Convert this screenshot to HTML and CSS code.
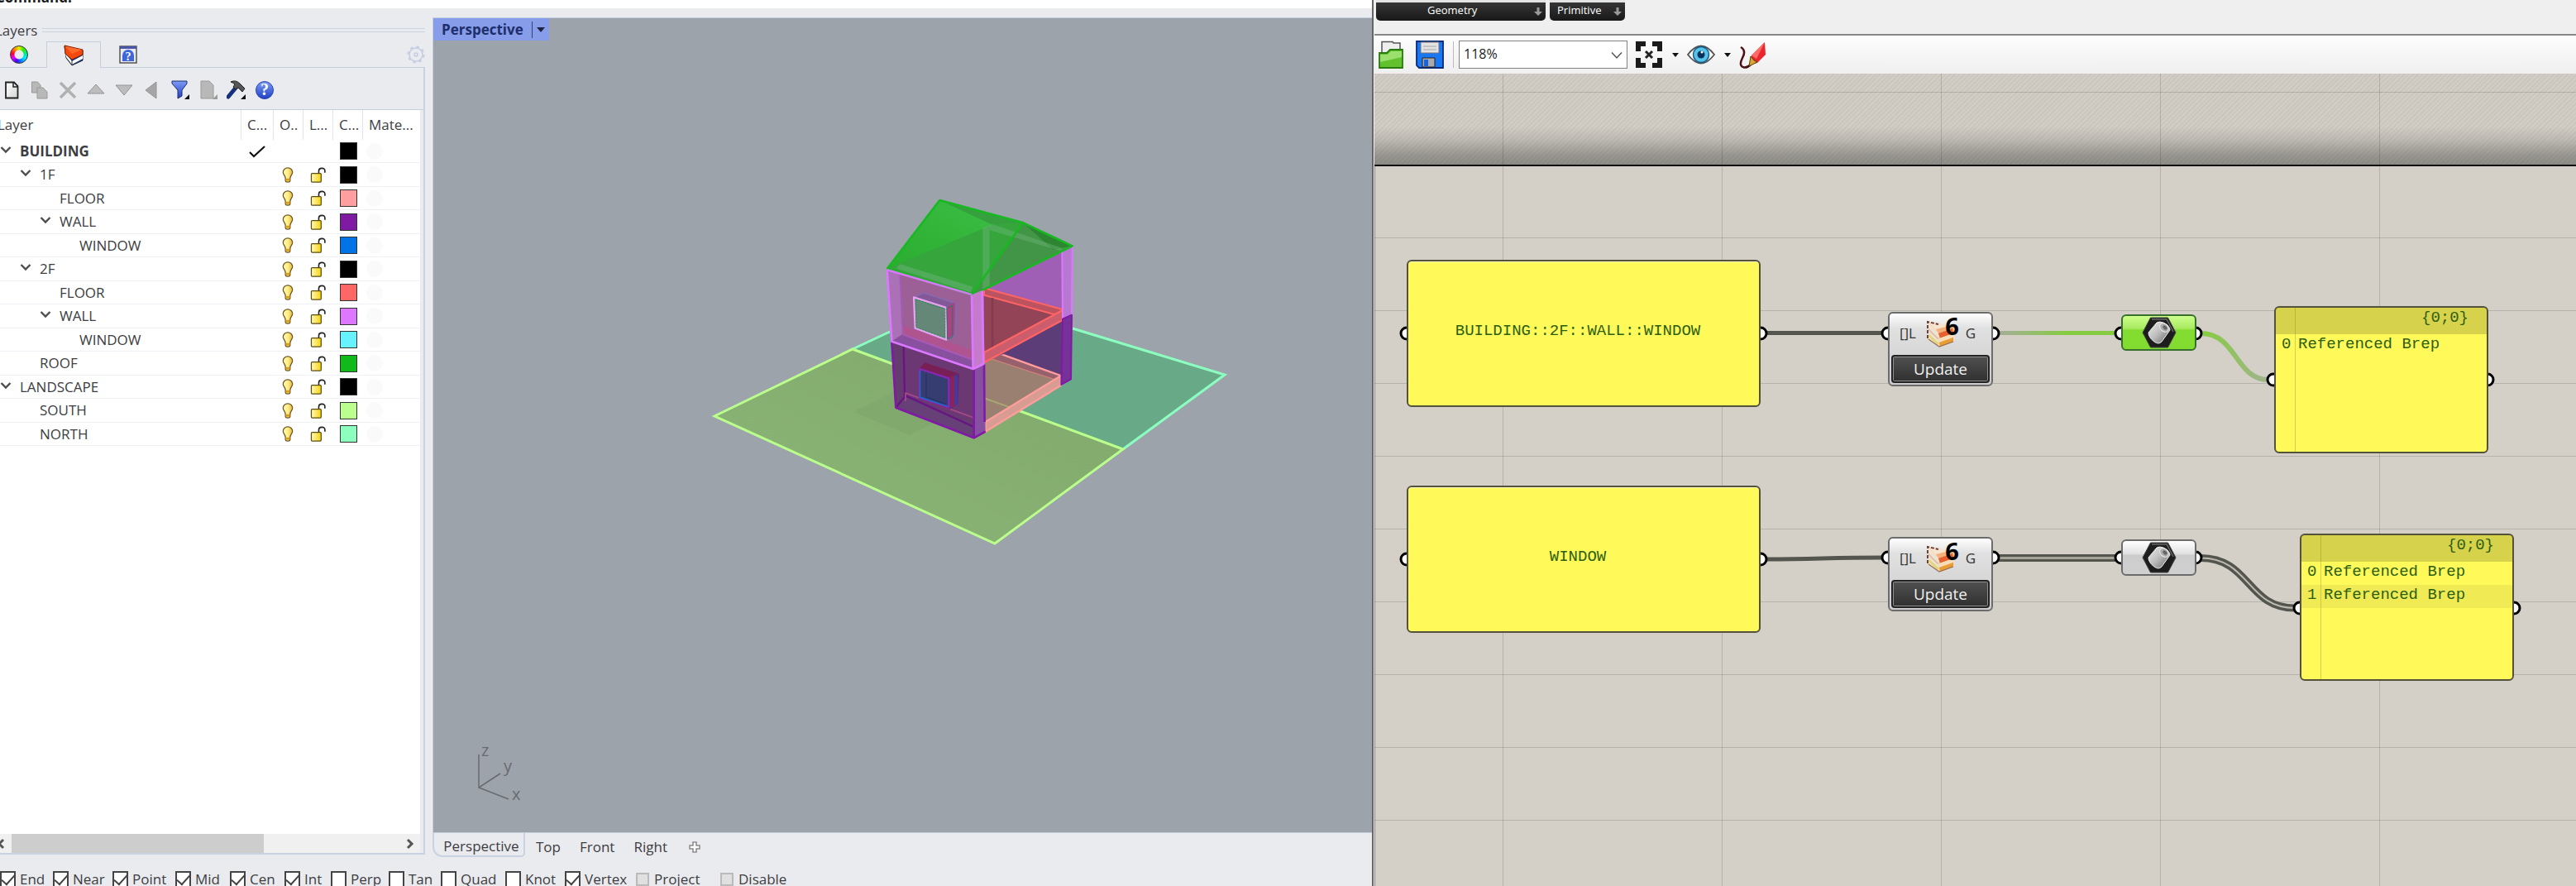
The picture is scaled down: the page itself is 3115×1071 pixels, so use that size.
FILE: index.html
```html
<!DOCTYPE html>
<html lang="en">
<head>
<meta charset="utf-8">
<title>Layers and graph</title>
<link rel="stylesheet" href="styles.css">
</head>
<body>
<svg class="defs" aria-hidden="true">
  <defs>
    <linearGradient id="gBulb" x1="0" y1="0" x2="1" y2="0"><stop offset="0" stop-color="#fff6b0"/><stop offset=".5" stop-color="#fff08a"/><stop offset="1" stop-color="#e8b83c"/></linearGradient>
    <linearGradient id="gLock" x1="0" y1="0" x2="1" y2="0"><stop offset="0" stop-color="#fff9bd"/><stop offset="1" stop-color="#f7d40d"/></linearGradient>
    <linearGradient id="gBlue" x1="0" y1="0" x2="0" y2="1"><stop offset="0" stop-color="#7e9bf5"/><stop offset="1" stop-color="#1f3fc4"/></linearGradient>
    <linearGradient id="gPage" x1="0" y1="0" x2="1" y2="1"><stop offset="0" stop-color="#fff"/><stop offset="1" stop-color="#d4d4d4"/></linearGradient>
    <linearGradient id="gMetal" x1="0" y1="0" x2="1" y2="1"><stop offset="0" stop-color="#eee"/><stop offset=".5" stop-color="#bbb"/><stop offset="1" stop-color="#666"/></linearGradient>
    <symbol id="chev" viewBox="0 0 14 10"><path d="M1.500 2 7 7.500 12.500 2" fill="none" stroke="#4d4d4d" stroke-width="2.400"/></symbol>
    <symbol id="bulb" viewBox="0 0 14 20"><path d="M7 1C3.500 1 1 3.500 1 6.500 1 9.500 4 11 4 14.500V17q0 2 3 2t3-2V14.500C10 11 13 9.500 13 6.500 13 3.500 10.500 1 7 1Z" fill="url(#gBulb)" stroke="#6b5220" stroke-width="1.300"/><path d="M4.500 14.500h5v3h-5z" fill="#d99e1c"/></symbol>
    <symbol id="lock" viewBox="0 0 20 20"><path d="M10.500 8V5Q10.500 1.500 14.500 1.500T18.300 5V7" fill="none" stroke="#222" stroke-width="1.700"/><rect x="1" y="8" width="12.500" height="11" rx="1" fill="url(#gLock)" stroke="#5c4c10" stroke-width="1.300"/></symbol>
    <symbol id="cake" viewBox="0 0 36 34">
      <path d="M2 3 16 6 30 8 34 18 33 27 16 33 8 28 2 24Z" fill="#f3dcc0"/>
      <path d="M2 3 18 5 30 12 18 18Z" fill="#f8e4cf"/>
      <path d="M12 12 32 7 34 14 18 22Z" fill="#f2b27c"/>
      <path d="M15 17 32 11 33 17 17 23Z" fill="#e8602f"/>
      <path d="M16 23 33 17 33 22 17 28Z" fill="#f7dcb4"/>
      <path d="M16 28 33 22 33 27 17 33Z" fill="#e99b34"/>
      <path d="M2 5 15 17V32L2 23Z" fill="#efe3d3"/>
      <path d="M3 12 15 24" stroke="#dfc0a8" stroke-width="2"/>
      <path d="M3 19 15 30" stroke="#e0d67c" stroke-width="3"/>
      <path d="M2 23V3L15 6" fill="none" stroke="#6d403c" stroke-width="2" stroke-dasharray="4 2"/>
      <path d="M3 24 16 33 33 27" fill="none" stroke="#9a6c50" stroke-width="1.200"/>
    </symbol>
    <symbol id="brep" viewBox="0 0 42 38">
      <path d="M10.500 1h21L41 19 31.500 37h-21L1 19Z" fill="#1d1d1d" stroke="#444"/>
      <path d="M12 3h18L38 18" fill="none" stroke="#666" stroke-width="1.500"/>
      <path d="M8 19 18 7q3-2 8 0 8 4 8 9L24 30q-4 4-9 0-7-5-7-11Z" fill="url(#gMetal)" stroke="#eee"/>
      <ellipse cx="27" cy="13" rx="6" ry="4.500" transform="rotate(45 27 13)" fill="#aaa" stroke="#eee"/><ellipse cx="28" cy="13" rx="3" ry="2" transform="rotate(45 28 13)" fill="#666"/>
    </symbol>
  </defs>
</svg>
<div class="screen">
  <main class="modeler">
    <div class="command"><span>Command:</span></div>
    <div class="workspace">
      <aside class="side">
        <h2 class="side-title"><span>Layers</span><i></i></h2>
        <div class="side-tabs">
          <button class="side-tab" aria-label="Properties"><span class="wheel"></span></button>
          <button class="side-tab active" aria-label="Layers"><svg width="24" height="26" viewBox="0 0 24 26"><path d="M1 2 23 7V19L10 25 3 16Z" fill="#123a8c" stroke="#222"/><path d="M2 10 10 20 23 13V17L10 24 3 15Z" fill="#fff"/><path d="M1 1 23 6V12L10 18 2 11Z" fill="#f4480d" stroke="#7b2108"/><path d="M2 2 22 6 10 11Z" fill="#ff6a2a"/><path d="M10 18V25" stroke="#333"/></svg></button>
          <button class="side-tab" aria-label="Help"><svg width="22" height="22" viewBox="0 0 22 22"><rect x="1" y="1" width="20" height="20" fill="#e8ebf2" stroke="#555" stroke-width="1.500"/><path d="M1 1h20v3H1z" fill="#4d55a8"/><path d="M4 19V12a7 7 0 0 1 14 0V19Z" fill="#3f66d8"/><text x="11" y="18" text-anchor="middle" class="q-mark">?</text></svg></button>
          <button class="gear" aria-label="Options"><svg width="22" height="22" viewBox="0 0 22 22" fill="none" stroke="#c3cde2" stroke-width="1.500"><circle cx="11" cy="11" r="8"/><circle cx="11" cy="11" r="9.500" stroke-width="2" stroke-dasharray="3.500 3.960"/><circle cx="11" cy="11" r="2"/></svg></button>
        </div>
        <div class="panel">
          <div class="tools">
            <button aria-label="New layer"><svg width="18" height="22" viewBox="0 0 18 22"><path d="M2 1.500H12L16.500 6V20.500H2Z" fill="url(#gPage)" stroke="#222" stroke-width="1.800"/><path d="M11 2V7H16" fill="none" stroke="#222" stroke-width="1.500"/></svg></button>
            <button aria-label="New sublayer"><svg width="20" height="22" viewBox="0 0 20 22"><g fill="#b8b8b8" stroke="#999"><path d="M.5 1h7L11 5v9H.5Z"/><path d="M7 8h7l5 5v8H7Z"/></g></svg></button>
            <button aria-label="Delete"><svg width="22" height="22" viewBox="0 0 22 22"><path d="M2 2 20 20M20 2 2 20" stroke="#b0b0b0" stroke-width="3.500"/></svg></button>
            <button aria-label="Move up"><svg width="22" height="22" viewBox="0 0 22 22"><path d="M11 4 21 15H1Z" fill="#bcbcbc" stroke="#949494"/></svg></button>
            <button aria-label="Move down"><svg width="22" height="22" viewBox="0 0 22 22"><path d="M11 17 21 5H1Z" fill="#bcbcbc" stroke="#949494"/></svg></button>
            <button aria-label="Move out"><svg width="22" height="22" viewBox="0 0 22 22"><path d="M3 11 16 1V21Z" fill="#a6a6a6" stroke="#949494"/></svg></button>
            <button aria-label="Filter"><svg width="24" height="24" viewBox="0 0 24 24"><path d="M2 1H20V4L14 12V19L9 22V12L2 4Z" fill="url(#gBlue)" stroke="#1c2f70"/><path d="M23 17V23H17Z" fill="#111"/></svg></button>
            <button aria-label="Report"><svg width="24" height="24" viewBox="0 0 24 24"><path d="M3 1H13L18 6V22H3Z" fill="#b8b8b8" stroke="#999"/><path d="M23 17V23H17Z" fill="#999"/></svg></button>
            <button aria-label="Tools"><svg width="24" height="24" viewBox="0 0 24 24"><path d="M2 20 12 8" stroke="#17307e" stroke-width="5" stroke-linecap="round"/><path d="M5 2Q11-1 16 4L22 10 19 14 14 9 11 11 8 8 10 5Q8 3 5 2Z" fill="#555" stroke="#222"/><path d="M23 17V23H17Z" fill="#111"/></svg></button>
            <button aria-label="Help"><svg width="24" height="24" viewBox="0 0 24 24"><circle cx="12" cy="12" r="10.500" fill="url(#gBlue)" stroke="#2745b5"/><text x="12" y="18" text-anchor="middle" class="q-mark big">?</text></svg></button>
          </div>
          <div class="list">
            <table class="layers">
              <colgroup><col><col class="c-cur"><col class="c-ico"><col class="c-ico"><col class="c-ico"><col class="c-mat"></colgroup>
              <thead><tr><th class="name-head">Layer</th><th>C...</th><th>O..</th><th>L...</th><th>C...</th><th>Mate...</th></tr></thead>
              <tbody>
                <tr><td class="l0 current"><svg class="chev"><use href="#chev"/></svg>BUILDING</td><td><svg class="check" viewBox="0 0 20 16"><path d="M1 9 6 14 19 2" fill="none" stroke="#111" stroke-width="2.200"/></svg></td><td></td><td></td><td><i class="sw" style="background:#000"></i></td><td><i class="mat"></i></td></tr>
                <tr><td class="l1"><svg class="chev"><use href="#chev"/></svg>1F</td><td></td><td><svg class="bulb"><use href="#bulb"/></svg></td><td><svg class="lock"><use href="#lock"/></svg></td><td><i class="sw" style="background:#000"></i></td><td><i class="mat"></i></td></tr>
                <tr><td class="l2">FLOOR</td><td></td><td><svg class="bulb"><use href="#bulb"/></svg></td><td><svg class="lock"><use href="#lock"/></svg></td><td><i class="sw" style="background:#ff9f9f"></i></td><td><i class="mat"></i></td></tr>
                <tr><td class="l2"><svg class="chev"><use href="#chev"/></svg>WALL</td><td></td><td><svg class="bulb"><use href="#bulb"/></svg></td><td><svg class="lock"><use href="#lock"/></svg></td><td><i class="sw" style="background:#7f1aa3"></i></td><td><i class="mat"></i></td></tr>
                <tr><td class="l3">WINDOW</td><td></td><td><svg class="bulb"><use href="#bulb"/></svg></td><td><svg class="lock"><use href="#lock"/></svg></td><td><i class="sw" style="background:#0073e6"></i></td><td><i class="mat"></i></td></tr>
                <tr><td class="l1"><svg class="chev"><use href="#chev"/></svg>2F</td><td></td><td><svg class="bulb"><use href="#bulb"/></svg></td><td><svg class="lock"><use href="#lock"/></svg></td><td><i class="sw" style="background:#000"></i></td><td><i class="mat"></i></td></tr>
                <tr><td class="l2">FLOOR</td><td></td><td><svg class="bulb"><use href="#bulb"/></svg></td><td><svg class="lock"><use href="#lock"/></svg></td><td><i class="sw" style="background:#ff6666"></i></td><td><i class="mat"></i></td></tr>
                <tr><td class="l2"><svg class="chev"><use href="#chev"/></svg>WALL</td><td></td><td><svg class="bulb"><use href="#bulb"/></svg></td><td><svg class="lock"><use href="#lock"/></svg></td><td><i class="sw" style="background:#dd77ff"></i></td><td><i class="mat"></i></td></tr>
                <tr><td class="l3">WINDOW</td><td></td><td><svg class="bulb"><use href="#bulb"/></svg></td><td><svg class="lock"><use href="#lock"/></svg></td><td><i class="sw" style="background:#66f2ff"></i></td><td><i class="mat"></i></td></tr>
                <tr><td class="l1">ROOF</td><td></td><td><svg class="bulb"><use href="#bulb"/></svg></td><td><svg class="lock"><use href="#lock"/></svg></td><td><i class="sw" style="background:#10ba18"></i></td><td><i class="mat"></i></td></tr>
                <tr><td class="l0"><svg class="chev"><use href="#chev"/></svg>LANDSCAPE</td><td></td><td><svg class="bulb"><use href="#bulb"/></svg></td><td><svg class="lock"><use href="#lock"/></svg></td><td><i class="sw" style="background:#000"></i></td><td><i class="mat"></i></td></tr>
                <tr><td class="l1">SOUTH</td><td></td><td><svg class="bulb"><use href="#bulb"/></svg></td><td><svg class="lock"><use href="#lock"/></svg></td><td><i class="sw" style="background:#bbff8f"></i></td><td><i class="mat"></i></td></tr>
                <tr><td class="l1">NORTH</td><td></td><td><svg class="bulb"><use href="#bulb"/></svg></td><td><svg class="lock"><use href="#lock"/></svg></td><td><i class="sw" style="background:#8cffbf"></i></td><td><i class="mat"></i></td></tr>
              </tbody>
            </table>
            <div class="hscroll"><svg width="10" height="14" viewBox="0 0 10 14"><path d="M8 2 3 7 8 12" fill="none" stroke="#555" stroke-width="3"/></svg><i></i><svg width="10" height="14" viewBox="0 0 10 14"><path d="M2 2 7 7 2 12" fill="none" stroke="#555" stroke-width="3"/></svg></div>
          </div>
        </div>
      </aside>
      <section class="views">
        <div class="viewport">
          <div class="view-label"><span>Perspective</span><button aria-label="View menu"></button></div>
          <svg class="scene" viewBox="524 22 1135 984">
            <defs><linearGradient id="gSouth" x1="0" y1="1" x2="1" y2="0"><stop offset="0" stop-color="#8cb578"/><stop offset="1" stop-color="#80a86b"/></linearGradient>
            <linearGradient id="gRoof" x1="0" y1="1" x2="1" y2="0"><stop offset="0" stop-color="#26a92b"/><stop offset="1" stop-color="#42c24a"/></linearGradient></defs>
            <path d="M1031 422 1076 401 1173 357 1297 397 1481 453 1358 543Z" fill="#68aa88"/>
            <path d="M1031 422 1076 401M1297 397 1481 453 1358 543" fill="none" stroke="#8cffc0" stroke-width="3"/>
            <path d="M864 503 1031 422 1358 543 1203 657Z" fill="url(#gSouth)" stroke="#baff8c" stroke-width="3"/>
            <path d="M1032 498 1080 474 1150 500 1100 526Z" fill="#82a96d"/>
            <g transform="translate(1040 220) scale(.33333)" stroke-linejoin="round">
              <path d="M450 640 735 490 735 710 520 625Z" fill="#5d3d78"/>
              <path d="M453 640 500 620 728 703 455 880Z" fill="#998070"/>
              <path d="M453 785 580 830" stroke="#aaa972" stroke-width="6"/>
              <path d="M510 622 728 700 705 716 455 632Z" fill="#96606c"/>
              <path d="M500 620 728 702" stroke="#ff9d9d" stroke-width="7"/><path d="M455 635 705 716" stroke="#c98078" stroke-width="4"/>
              <path d="M455 870 728 703 728 738 455 905Z" fill="#d99c92" stroke="#ff9d9d" stroke-width="7"/>
              <path d="M445 395 735 245 735 490 450 640Z" fill="#9e5fb5"/>
              <path d="M450 640 735 495 735 500 520 625Z" fill="#5d3d78"/>
              <path d="M450 385 735 465 450 620Z" fill="#934456"/>
              <path d="M450 385 735 462 712 482 450 410Z" fill="#bd5360" stroke="#ff6464" stroke-width="6"/>
              <path d="M480 420V600" stroke="#823c50" stroke-width="8"/>
              <path d="M450 618 735 465 735 500 450 655Z" fill="#cc5d6c" stroke="#ff6464" stroke-width="7"/>
              <path d="M733 245 770 232 768 482 735 497Z" fill="#b877d0" stroke="#dc78ff" stroke-width="6"/>
              <path d="M735 497 768 482 765 715 730 735Z" fill="#77329a" stroke="#8019a5" stroke-width="6"/>
              <path d="M115 578 413 680 413 928 130 818Z" fill="#663b70"/>
              <path d="M158 595 160 770 413 870V680Z" fill="#6c3873"/>
              <path d="M130 818 160 770 413 885V928Z" fill="#664077"/>
              <path d="M158 595 162 775M130 818 165 775 413 888" fill="none" stroke="#681483" stroke-width="7"/>
              <path d="M165 795V765L455 870" fill="none" stroke="#a84b87" stroke-width="5"/>
              <path d="M413 680 450 660 455 905 413 928Z" fill="#8550a0"/>
              <path d="M115 578 130 818 413 928 455 905M413 680V928M450 660 452 870" fill="none" stroke="#8219a6" stroke-width="8"/>
              <path d="M215 675 235 655 360 695 355 805 325 825 215 785Z" fill="#782056"/><path d="M325 713 355 695 355 805 325 822Z" fill="#443a9b"/><path d="M335 705V815" stroke="#8d2259" stroke-width="14"/>
              <path d="M217 678 322 712V818L217 783Z" fill="#363d70" stroke="#8728b5" stroke-width="7"/><path d="M217 683V780L318 814" fill="none" stroke="#176dcc" stroke-width="4"/><path d="M240 695V780L310 805" fill="none" stroke="#2a3568" stroke-width="5"/>
              <path d="M98 318 405 408 410 678 115 578Z" fill="#9c5f96"/>
              <path d="M98 318 145 330 155 550 115 578Z" fill="#aa71b7"/>
              <path d="M155 520 405 610 409 645 155 553Z" fill="#b05490"/>
              <path d="M115 578 155 553 410 645V678Z" fill="#8950a0"/>
              <path d="M145 330 155 553 410 645" fill="none" stroke="#a65ab8" stroke-width="6"/>
              <path d="M405 408 443 395 448 660 410 678Z" fill="#c67acb"/>
              <path d="M98 318 115 578 410 678 448 660 443 395M98 318 405 408 410 678" fill="none" stroke="#dc78ff" stroke-width="8"/>
              <path d="M195 418 230 402 348 440 345 555 315 572Z" fill="#825898" stroke="#8969ad" stroke-width="5"/><path d="M315 455 343 435 340 550 318 570Z" fill="#b04083"/>
              <path d="M195 418 310 455 313 572 200 530Z" fill="#648777" stroke="#e7a0ee" stroke-width="7"/><path d="M202 426 308 460V565L204 527Z" fill="none" stroke="#258e55" stroke-width="3" stroke-dasharray="8 3"/><path d="M315 458 335 448V562L317 570Z" fill="none" stroke="#267b58" stroke-width="3"/>
              <path d="M98 315 289 66 592 148 770 232 445 392 405 408Z" fill="url(#gRoof)"/>
              <path d="M98 315 480 155 592 148 405 408Z" fill="#35a53c"/>
              <path d="M289 66 592 148 480 155Z" fill="#369f3e"/>
              <path d="M592 148 770 232 445 392 405 408Z" fill="#429447"/>
              <path d="M592 148 770 232 700 245Z" fill="#2d8431"/>
              <path d="M480 153 735 240 728 250 470 175V380L445 392V165Z" fill="#73b77c" opacity=".4"/>
              <path d="M145 298 410 380 400 400 130 313Z" fill="#5cae68" opacity=".7"/>
              <path d="M98 315 289 66 592 148 770 232 445 392M592 148 405 408M98 315 405 408" fill="none" stroke="#18b822" stroke-width="8"/>
              <path d="M98 318 405 408" fill="none" stroke="#dc78ff" stroke-width="7"/>
            </g>
            <g fill="none" stroke="#696b6f" stroke-width="1.500"><path d="M579 912V952L605 935M579 952 615 966"/></g>
            <g class="axis"><text x="582" y="914">z</text><text x="609" y="933">y</text><text x="619" y="967">x</text></g>
          </svg>
        </div>
        <nav class="view-tabs"><button class="active">Perspective</button><button>Top</button><button>Front</button><button>Right</button><button class="add" aria-label="Add view"><svg width="14" height="14" viewBox="0 0 14 14"><path d="M5 1H9V5H13V9H9V13H5V9H1V5H5Z" fill="#fff" stroke="#8c8c8c" stroke-width="1.500"/></svg></button></nav>
      </section>
    </div>
    <form class="osnap">
      <label><input type="checkbox" checked>End</label><label><input type="checkbox" checked>Near</label><label><input type="checkbox" checked>Point</label><label><input type="checkbox" checked>Mid</label><label><input type="checkbox" checked>Cen</label><label><input type="checkbox" checked>Int</label><label><input type="checkbox">Perp</label><label><input type="checkbox">Tan</label><label><input type="checkbox">Quad</label><label><input type="checkbox">Knot</label><label><input type="checkbox" checked>Vertex</label><label><input type="checkbox" class="dim">Project</label><label><input type="checkbox" class="dim">Disable</label>
    </form>
  </main>
  <section class="graph">
    <header class="ribbon">
      <button class="group wide"><span>Geometry</span><svg width="10" height="12" viewBox="0 0 10 12"><path d="M3.500 1h3v5H10L5 11 0 6H3.500Z" fill="#999"/></svg></button>
      <button class="group"><span>Primitive</span><svg width="10" height="12" viewBox="0 0 10 12"><path d="M3.500 1h3v5H10L5 11 0 6H3.500Z" fill="#999"/></svg></button>
    </header>
    <div class="graph-bar">
      <button class="open" aria-label="Open"><svg width="30" height="34" viewBox="0 0 30 34"><path d="M4 14V1.500H17L18 3H26V14" fill="#eee" stroke="#555" stroke-width="1.500"/><path d="M1 15H10L14 11H29V33H1Z" fill="#61c22d" stroke="#2a7a12" stroke-width="1.800"/><path d="M2 17H11L15 13H28V20L2 26Z" fill="#9be06e"/></svg></button>
      <button class="save" aria-label="Save"><svg width="34" height="34" viewBox="0 0 34 34"><path d="M1 1H33V33H4L1 30Z" fill="#1a77f2" stroke="#0a2a7c" stroke-width="1.800"/><path d="M6 2H28V15H6Z" fill="#e3e3e3" stroke="#777"/><path d="M9 7H25M9 11H25" stroke="#bbb" stroke-width="1.500"/><path d="M8 21H23V32H8Z" fill="#aaa" stroke="#222"/><path d="M10 23H15V31H10Z" fill="#1a63e0"/></svg></button>
      <i class="sep"></i>
      <span class="zoom-box"><select aria-label="Zoom"><option>118%</option></select><svg width="14" height="10" viewBox="0 0 14 10"><path d="M1 1.500 7 8 13 1.500" fill="none" stroke="#555" stroke-width="1.500"/></svg></span>
      <button class="tool" aria-label="Zoom extents"><svg width="34" height="34" viewBox="0 0 34 34"><path d="M4 13V4H13M21 4H30V13M30 21V30H21M13 30H4V21" fill="none" stroke="#1a1a1a" stroke-width="6"/><path d="M13 13 21 21M21 13 13 21" stroke="#222" stroke-width="3"/></svg></button>
      <button class="drop" aria-label="Extents menu"></button>
      <button class="tool" aria-label="Preview"><svg width="34" height="24" viewBox="0 0 34 24"><path d="M1 12Q17-9 33 12 17 33 1 12Z" fill="#fff" stroke="#555" stroke-width="1.800"/><circle cx="17" cy="12" r="9.500" fill="#55c3ea" stroke="#155c86" stroke-width="1.500"/><circle cx="17" cy="12" r="4.500" fill="#07305a"/><circle cx="18" cy="9" r="1.500" fill="#fff"/></svg></button>
      <button class="drop" aria-label="Preview menu"></button>
      <button class="tool" aria-label="Sketch"><svg width="34" height="34" viewBox="0 0 34 34"><path d="M2 8Q9 12 4 21-1 31 6 32.500 10 33 14 29" fill="none" stroke="#4a1014" stroke-width="2.500"/><path d="M31 2 32 17 22 27 13 29 15 18Z" fill="#e9262e"/><path d="M31 2 21 22 15 18Z" fill="#ff6b66"/><path d="M14 19 18 24 22 26 12 31Z" fill="#dba534" stroke="#5a3d10"/></svg></button>
    </div>
    <div class="canvas">
      <div class="edge"></div>
      <div class="grid"></div>
      <svg class="wires" width="1452" height="982">
        <defs><linearGradient id="w1" gradientUnits="userSpaceOnUse" x1="2419" y1="0" x2="2558" y2="0"><stop offset="0" stop-color="#a4ae96"/><stop offset=".6" stop-color="#86cc40"/></linearGradient>
        <linearGradient id="w2" gradientUnits="userSpaceOnUse" x1="2664" y1="0" x2="2742" y2="0"><stop offset="0" stop-color="#86cc40"/><stop offset="1" stop-color="#a0b48c"/></linearGradient></defs>
        <g transform="translate(-1663 -89)" fill="none">
          <path d="M2137 402.500H2278M2137 676C2200 676 2210 674 2278 674" stroke="#555550" stroke-width="5"/>
          <path d="M2416 402H2562V403H2416Z" stroke="url(#w1)" stroke-width="4"/>
          <path d="M2662 403C2706 403 2704 459 2744 459" stroke="url(#w2)" stroke-width="6"/>
          <path d="M2416 674.500H2560" stroke="#555550" stroke-width="9"/><path d="M2416 674.500H2560" stroke="#a5a499" stroke-width="3"/>
          <path d="M2662 674.500C2722 674.500 2718 735 2776 735" stroke="#555550" stroke-width="9"/><path d="M2662 674.500C2722 674.500 2718 735 2776 735" stroke="#bdbbb0" stroke-width="2"/>
          <g fill="#fff" stroke="#000" stroke-width="3">
            <circle cx="1702" cy="403" r="7"/><circle cx="2130" cy="403" r="7"/><circle cx="1702" cy="676" r="7"/><circle cx="2130" cy="676" r="7"/>
            <circle cx="2284" cy="403" r="7"/><circle cx="2411" cy="403" r="7"/><circle cx="2284" cy="674" r="7"/><circle cx="2411" cy="674" r="7"/>
            <circle cx="2566" cy="403" r="7"/><circle cx="2656" cy="403" r="7"/><circle cx="2566" cy="674" r="7"/><circle cx="2656" cy="674" r="7"/>
            <circle cx="2750" cy="459" r="7"/><circle cx="3009" cy="459" r="7"/><circle cx="2782" cy="735" r="7"/><circle cx="3041" cy="735" r="7"/>
          </g>
        </g>
      </svg>
      <div class="node note n1">BUILDING::2F::WALL::WINDOW</div>
      <div class="node note n2">WINDOW</div>
      <div class="node comp n3"><div class="ports"><span>[]L</span><span class="ver"><svg width="36" height="34"><use href="#cake"/></svg><b>6</b></span><span>G</span></div><button>Update</button></div>
      <div class="node comp n4"><div class="ports"><span>[]L</span><span class="ver"><svg width="36" height="34"><use href="#cake"/></svg><b>6</b></span><span>G</span></div><button>Update</button></div>
      <div class="node param selected n5"><svg width="42" height="38"><use href="#brep"/></svg></div>
      <div class="node param n6"><svg width="42" height="38"><use href="#brep"/></svg></div>
      <div class="node out n7"><div class="path">{0;0}</div><div class="item"><span>0</span><span>Referenced Brep</span></div></div>
      <div class="node out n8"><div class="path">{0;0}</div><div class="item"><span>0</span><span>Referenced Brep</span></div><div class="item"><span>1</span><span>Referenced Brep</span></div></div>
    </div>
  </section>
</div>
</body>
</html>
```
FILE: styles.css
```css
* { box-sizing: border-box; }
body { margin: 0; font: 17px/22px "Open Sans", "Noto Sans", sans-serif; color: #3d3d42; background: #eaebef; }
button { font: inherit; color: inherit; background: none; border: 0; padding: 0; display: flex; align-items: center; justify-content: center; }
svg { display: block; flex: none; }
.defs { position: absolute; width: 0; height: 0; }
.screen { display: grid; grid-template-columns: 1659fr 1456fr; height: 100vh; min-height: 640px; overflow: hidden; }

/* modeler window */
.modeler { display: flex; flex-direction: column; min-width: 0; min-height: 0; overflow: hidden; background: #eaebef; }
.command { height: 10px; flex: none; background: #fff; display: flex; align-items: flex-end; padding-bottom: 2px; font-weight: 700; color: #1c1c1c; overflow: hidden; }
.command span { margin-left: -5px; }
.workspace { flex: 1; display: flex; gap: 9px; min-height: 0; }
.side { width: 514px; flex: none; display: flex; flex-direction: column; padding-bottom: 3px; }
.side-title { margin: 0; height: 40px; padding-top: 13px; display: flex; align-items: center; gap: 6px; font-size: 17px; font-weight: 400; }
.side-title span { margin-left: -6px; }
.side-title i { flex: 1; height: 5px; border: solid #ccd4e4; border-width: 1px 0; }
.side-tabs { height: 32px; flex: none; display: flex; align-items: stretch; border-bottom: 1px solid #c5cfe0; }
.side-tab { width: 66px; margin-bottom: -1px; }
.side-tab:first-child { margin-left: -10px; }
.side-tab.active { background: #eaebef; border: 1px solid #c5cfe0; border-bottom: 0; }
.wheel { width: 22px; height: 22px; border-radius: 50%; border: 1px solid #333; background: radial-gradient(circle, #eaebef 0 5px, transparent 6px), conic-gradient(#e0f000, #ff8000, #f03, #e0f, #40f, #08f, #0ef, #0e8, #3e0, #e0f000); transform: scaleX(-1); }
.gear { margin-left: auto; }
.q-mark { font: 700 14px "Liberation Serif", serif; fill: #fff; }
.q-mark.big { font-size: 20px; }
.panel { flex: 1; min-height: 0; display: flex; flex-direction: column; border-right: 2px solid #c9d2e3; border-bottom: 2px solid #c9d2e3; padding-right: 4px; }
.tools { height: 51px; flex: none; display: flex; align-items: center; margin-right: -4px; padding-top: 4px; border-bottom: 1px solid #c5cfe0; }
.tools button { width: 34px; height: 28px; }
.tools button:first-child { margin-left: -3px; }
.list { flex: 1; background: #fff; display: flex; flex-direction: column; justify-content: space-between; min-height: 0; }
.layers { table-layout: fixed; width: 100%; border-collapse: separate; border-spacing: 0; }
.c-cur { width: 39px; } .c-ico { width: 36px; } .c-mat { width: 70px; }
.layers th { height: 36px; padding: 0 0 0 7px; font-weight: 400; text-align: left; border-left: 1px solid #e0e4ec; overflow: hidden; white-space: nowrap; }
.layers th.name-head { border: 0; text-indent: -10px; }
.layers tbody tr { height: 28px; }
.layers tbody tr:nth-child(even) { height: 29px; }
.layers td { padding: 0; border-bottom: 1px solid #eff1f4; line-height: 22px; }
.layers svg { margin: 0 auto; }
.layers td .chev { display: inline-block; width: 14px; height: 10px; margin: 0 10px 3px -24px; }
.l0 { text-indent: 24px; } .l1 { text-indent: 48px; } .l2 { text-indent: 72px; } .l3 { text-indent: 96px; }
.current { font-weight: 700; }
.check { width: 20px; height: 16px; } .bulb { width: 14px; height: 19px; }
.layers .lock { width: 20px; height: 19px; margin-left: 9px; }
.sw { display: block; width: 21px; height: 21px; margin: 0 auto 0 9px; border: 1px solid #333; }
.mat { display: block; width: 20px; height: 20px; margin-left: 5px; border-radius: 50%; background: #fafafa; }
.hscroll { height: 23px; flex: none; background: #f0f0f0; display: flex; align-items: center; padding-right: 7px; }
.hscroll svg:first-child { margin: 0 8px 0 -4px; }
.hscroll i { width: 305px; height: 23px; background: #cdcdcd; margin-right: auto; }

.views { flex: 1; min-width: 0; display: flex; flex-direction: column; padding-top: 11px; }
.viewport { flex: 1; min-height: 0; position: relative; background: #9da3ab; border: solid #c5cfe0; border-width: 1px 0 1px 1px; }
.scene { width: 100%; height: 100%; }
.view-label { position: absolute; left: 0; top: 0; height: 27px; width: 140px; background: #879dea; display: flex; align-items: center; padding-left: 10px; font-weight: 700; color: #1d2f6a; }
.view-label button { margin-left: auto; width: 21px; height: 20px; border-left: 1px solid #33426e; }
.view-label button::after { content: ""; border: 5px solid transparent; border-top: 6px solid #1d2440; border-bottom: 0; }
.axis { font: 20px "Open Sans", sans-serif; fill: #696b6f; }
.view-tabs { height: 29px; flex: none; display: flex; align-items: stretch; }
.view-tabs button { margin-right: 23px; padding-top: 4px; }
.view-tabs .active { width: 112px; margin-right: 13px; padding-left: 6px; border: solid #c9d2e3; border-width: 0 2px 2px 2px; border-radius: 0 0 5px 12px; }
.view-tabs .add { margin-left: 3px; }
.osnap { height: 35px; flex: none; overflow: hidden; display: grid; grid-template-columns: 64px 72px 76px 66px 66px 56px 70px 63px 78px 72px 86px 102px 90px; padding-top: 17px; align-items: start; }
.osnap label { display: flex; align-items: center; gap: 5px; line-height: 20px; white-space: nowrap; }
.osnap input { appearance: none; flex: none; width: 19px; height: 20px; margin: 0; border: 2px solid #444; background: #fff; display: grid; place-items: center; }
.osnap input:checked::after { content: ""; width: 14px; height: 7px; border: solid #444; border-width: 0 0 2px 2px; transform: translateY(-2px) rotate(-48deg); }
.osnap .dim { width: 16px; height: 16px; background: #e0e0e0; border-color: #bababa; margin-right: 1px; }

/* graph window */
.graph { display: flex; flex-direction: column; min-width: 0; min-height: 0; overflow: hidden; background: #efefef; border-left: 2px solid #666; padding-left: 1px; }
.ribbon { height: 41px; flex: none; display: flex; align-items: flex-start; gap: 5px; padding-left: 2px; }
.group { width: 91px; height: 25px; padding: 0 4px 5px 9px; justify-content: space-between; border-top: 3px solid #e4e4e4; border-radius: 0 0 5px 5px; background: linear-gradient(#353535, #181818); color: #fff; font-size: 13px; line-height: 16px; }
.group.wide { width: 205px; padding-left: 62px; }
.group svg { margin-top: 5px; }
.graph-bar { height: 48px; flex: none; display: flex; align-items: center; padding-left: 5px; border-top: 2px solid #888; background: linear-gradient(#fdfdfd, #efefef); }
.save { margin-left: 15px; }
.sep { width: 1px; height: 32px; margin: 0 6px 0 11px; background: #bbb; }
.zoom-box { position: relative; width: 204px; height: 34px; margin-right: 9px; }
.zoom-box select { appearance: none; width: 100%; height: 100%; padding: 0 5px 2px; border: 1px solid #828282; border-radius: 0; background: #fff; font: 16px "Open Sans", sans-serif; color: #222; }
.zoom-box svg { position: absolute; right: 6px; top: 13px; }
.drop { width: 29px; height: 34px; }
.drop::after { content: ""; border: 4px solid transparent; border-top: 5px solid #111; border-bottom: 0; }
.canvas { position: relative; flex: 1; min-height: 0; overflow: hidden; background: #d4d0c8; box-shadow: inset 1px 0 #888; }
.edge { height: 112px; border-bottom: 2px solid #111; background: linear-gradient(rgba(60,60,60,0) 58%, rgba(60,60,60,.12) 72%, rgba(60,60,60,.38) 90%, rgba(60,60,60,.45)), repeating-linear-gradient(135deg, #cac6be 0 2px, #d2cec6 2px 4px); }
.grid { position: absolute; inset: 0; background: linear-gradient(90deg, rgba(0,0,0,.14) 1px, transparent 1px) 155px 0 / 265px 88px, linear-gradient(rgba(0,0,0,.14) 1px, transparent 1px) 0 22px / 265px 88px; }
.wires { position: absolute; left: 0; top: 0; }
.node { position: absolute; border: 2px solid #54523a; border-radius: 6px; }
.note { width: 428px; height: 178px; padding-bottom: 6px; padding-right: 14px; display: flex; align-items: center; justify-content: center; background: #fff95a; box-shadow: inset 0 1px #fffcc0; font: 19px/22px "Liberation Mono", monospace; color: #2c5f10; }
.out { width: 259px; height: 178px; background: linear-gradient(90deg, transparent 23px, rgba(90,90,0,.25) 23px 24px, transparent 24px) #fff95a; font: 19px/28px "Liberation Mono", monospace; color: #2c5f10; }
.path { height: 32px; padding-right: 22px; line-height: 24px; text-align: right; background: rgba(110,110,40,.28); }
.item { display: grid; grid-template-columns: 20px 1fr; padding-left: 7px; height: 28px; line-height: 24px; }
.item:nth-child(3) { background: rgba(160,160,60,.16); }
.comp { width: 127px; height: 90px; padding: 0 2px 2px; display: flex; flex-direction: column; justify-content: space-between; border-color: #6c6c6c; background: linear-gradient(#fff, #e0e0e0 18px, #ccc); color: #333; }
.ports { height: 48px; display: flex; align-items: center; justify-content: space-between; padding: 0 17px 0 10px; }
.ver { position: relative; }
.ver b { position: absolute; right: -4px; top: -6px; font: 700 29px/28px "Open Sans", sans-serif; color: #000; }
.comp button { height: 34px; border: 2px solid #222; border-radius: 4px; box-shadow: inset 0 0 0 1px #909090; background: linear-gradient(#505050, #303030); color: #f0f0f0; font-size: 19px; }
.param { width: 91px; height: 44px; display: flex; align-items: center; justify-content: center; border-color: #6c6c6c; background: linear-gradient(#fff, #e0e0e0 40%, #ccc 42%, #d0d0d0); }
.selected { border-color: #37702d; background: linear-gradient(#ccff8c, #a8ea60 38%, #84dc30 42%, #82dc30); }
.n1 { left: 39px; top: 225px; } .n2 { left: 39px; top: 498px; }
.n3 { left: 621px; top: 288px; } .n4 { left: 621px; top: 560px; }
.n5 { left: 903px; top: 291px; } .n6 { left: 903px; top: 563px; }
.n7 { left: 1088px; top: 281px; } .n8 { left: 1119px; top: 556px; }
```
